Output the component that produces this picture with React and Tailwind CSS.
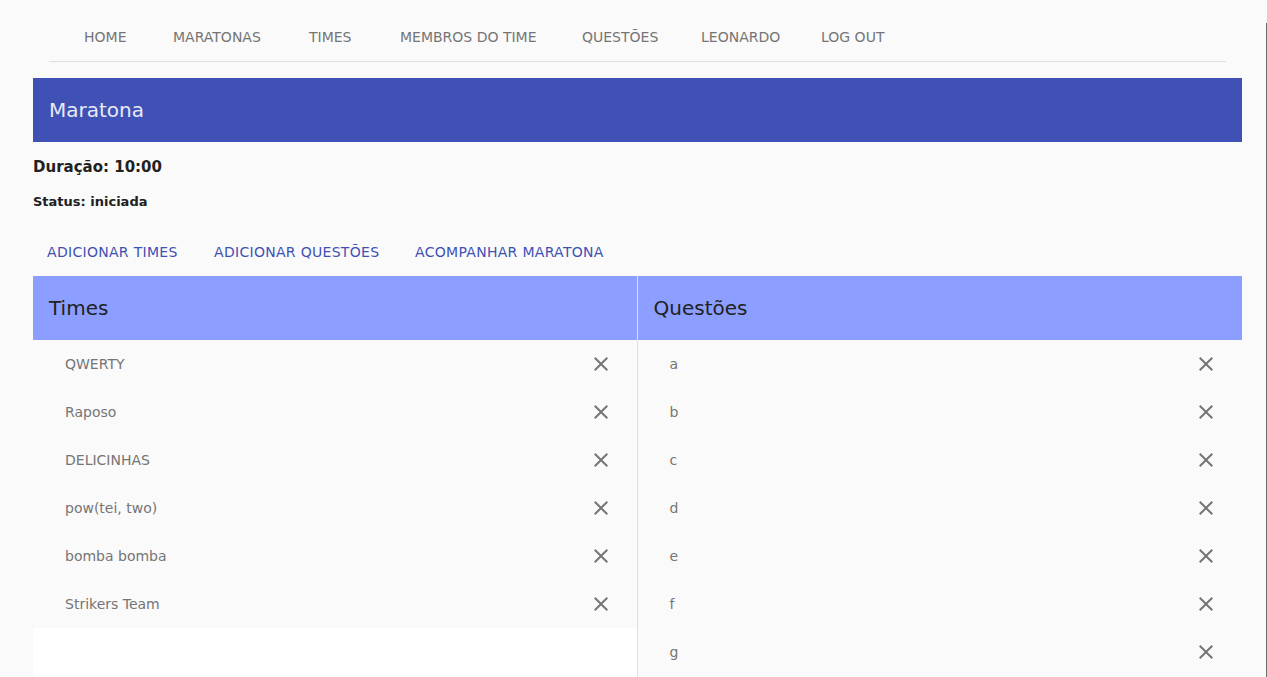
import React from 'react';
import { MdClose } from 'react-icons/md';

// widths measured from the mockup so items land where they should
const navItems = [
  { label: 'Home', w: 'w-[89px]' },
  { label: 'Maratonas', w: 'w-[136px]' },
  { label: 'Times', w: 'w-[91px]' },
  { label: 'Membros do Time', w: 'w-[182px]' },
  { label: 'Questões', w: 'w-[119px]' },
  { label: 'Leonardo', w: 'w-[120px]' },
  { label: 'Log out', w: 'w-[105px]' },
];
const actions = [
  { label: 'Adicionar times', w: 'w-[167px]' },
  { label: 'Adicionar questões', w: 'w-[201px]' },
  { label: 'Acompanhar maratona', w: 'w-[210px]' },
];
const times = ['QWERTY', 'Raposo', 'DELICINHAS', 'pow(tei, two)', 'bomba bomba', 'Strikers Team'];
const questoes = ['a', 'b', 'c', 'd', 'e', 'f', 'g'];

const ListColumn = ({ title, items, bordered, filler }) => (
  <div className={`flex flex-col ${bordered ? 'border-r border-[#e0e0e0]' : ''}`}>
    <div className="h-16 shrink-0 bg-[#8c9eff] flex items-center px-4 text-[20px] text-[#212121]">
      {title}
    </div>
    <ul className="bg-[#fafafa]">
      {items.map((item) => (
        <li key={item} className="h-12 flex items-center justify-between pl-8 pr-6 text-[14px] text-[#757575]">
          <span>{item}</span>
          <MdClose className="w-6 h-6 text-[#757575]" />
        </li>
      ))}
    </ul>
    {filler && <div className="flex-1 bg-white" />}
  </div>
);

export default function App() {
  return (
    <div className="relative h-[677px] overflow-hidden bg-[#fafafa] font-['DejaVu_Sans',sans-serif]">
      <nav className="ml-[49px] mr-[41px] h-[62px] border-b border-[#e0e0e0] flex items-end pb-[6px] pl-[15px]">
        {navItems.map((item) => (
          <a key={item.label} className={`${item.w} pl-5 text-[14px] uppercase text-[#757575] h-9 flex items-center`}>
            {item.label}
          </a>
        ))}
      </nav>

      <div className="ml-[33px] mr-[25px] mt-4">
        <div className="h-16 bg-[#3f51b5] flex items-center px-4 text-[20px] text-[#e8eaf6]">
          Maratona
        </div>

        <p className="mt-[15px] text-[15px] font-bold text-[#212121] leading-5">Duração: 10:00</p>
        <p className="mt-[17px] text-[13px] font-bold text-[#212121] leading-4">Status: iniciada</p>

        <div className="flex items-center h-9 mt-[24px] mb-[6px]">
          {actions.map((b) => (
            <button key={b.label} className={`${b.w} text-left pl-[14px] h-9 text-[14px] tracking-[0.3px] uppercase text-[#3f51b5]`}>
              {b.label}
            </button>
          ))}
        </div>

        <div className="grid grid-cols-2 h-[410px]">
          <ListColumn title="Times" items={times} bordered filler />
          <ListColumn title="Questões" items={questoes} />
        </div>
      </div>

      {/* window scrollbar edge */}
      <div className="absolute right-0 top-[23px] bottom-0 w-px bg-[#6e6e6e]" />
    </div>
  );
}
